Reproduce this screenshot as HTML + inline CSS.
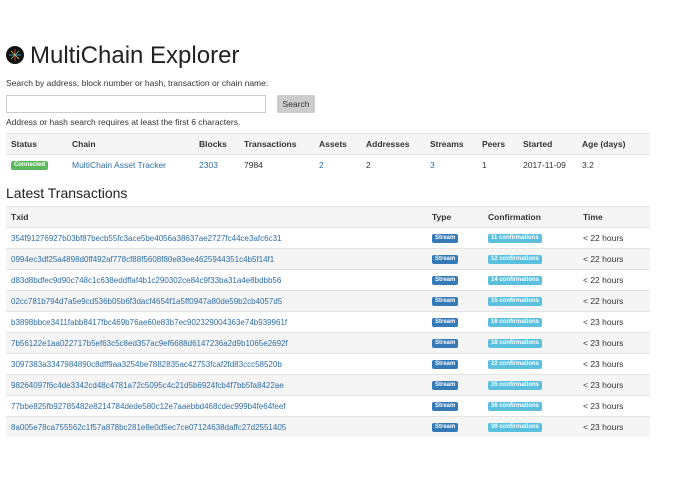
<!DOCTYPE html>
<html><head><meta charset="utf-8"><style>
body{margin:0;background:#fff;font-family:"Liberation Sans",sans-serif;color:#333;font-size:8.5px;}
.wrap{position:absolute;left:6px;top:0;width:644px;}
h1{position:absolute;left:0;top:41px;margin:0;font-size:24px;font-weight:normal;color:#222;line-height:30px;white-space:nowrap}
.logo{display:inline-block;width:18px;height:18px;border-radius:50%;background:#111;vertical-align:-1px;margin-right:6px;position:relative}
.p1{position:absolute;top:78px;left:0;white-space:nowrap}
input{position:absolute;top:95px;left:0;width:258px;height:16px;border:1px solid #ccc;padding:0;margin:0}
.btn{position:absolute;top:95px;left:271px;width:38px;height:18px;background:#ccc;border-radius:2px;text-align:center;line-height:18px;color:#333}
.p2{position:absolute;top:117px;left:0;white-space:nowrap}
table{position:absolute;left:0;width:644px;border-collapse:collapse}
td,th{text-align:left;padding:0 0 0 5px;height:20px;border-top:1px solid #e3e3e3;white-space:nowrap;vertical-align:middle}
th{font-weight:bold;color:#333}
tr.g{background:#f5f5f5}
a{color:#2e6da4;text-decoration:none}
.tx a{font-size:8px}
.lbl{display:inline-block;font-size:6px;color:#fff;font-weight:bold;padding:1px 3px;border-radius:2px;line-height:7px;vertical-align:middle}
h2{position:absolute;top:185px;left:0;margin:0;font-size:14px;font-weight:normal;color:#222}
</style></head><body><div class="wrap">
<h1><span class="logo"><svg width="18" height="18" viewBox="0 0 18 18" style="position:absolute;left:0;top:0"><g stroke-width="0.8"><line x1="9" y1="3" x2="9" y2="15" stroke="#e44"/><line x1="3" y1="9" x2="15" y2="9" stroke="#4ae"/><line x1="5" y1="5" x2="13" y2="13" stroke="#ec4"/><line x1="13" y1="5" x2="5" y2="13" stroke="#6c6"/></g></svg></span>MultiChain Explorer</h1>
<div class="p1">Search by address, block number or hash, transaction or chain name:</div>
<input type="text"><div class="btn">Search</div>
<div class="p2">Address or hash search requires at least the first 6 characters.</div>
<table style="top:133px">
<tr class="g"><th style="width:56px">Status</th><th style="width:122px">Chain</th><th style="width:40px">Blocks</th><th style="width:70px">Transactions</th><th style="width:42px">Assets</th><th style="width:59px">Addresses</th><th style="width:47px">Streams</th><th style="width:36px">Peers</th><th style="width:54px">Started</th><th>Age (days)</th></tr>
<tr><td><span class="lbl" style="background:#5cb85c">Connected</span></td><td><a>MultiChain Asset Tracker</a></td><td><a>2303</a></td><td>7984</td><td><a>2</a></td><td>2</td><td><a>3</a></td><td>1</td><td>2017-11-09</td><td>3.2</td></tr>
</table>
<h2>Latest Transactions</h2>
<table style="top:206px" class="tx">
<tr class="g"><th style="width:416px">Txid</th><th style="width:51px">Type</th><th style="width:90px">Confirmation</th><th>Time</th></tr>
<tr><td><a>354f91276927b03bf87becb55fc3ace5be4056a38637ae2727fc44ce3afc6c31</a></td><td><span class="lbl" style="background:#337ab7">Stream</span></td><td><span class="lbl" style="background:#5bc0de">11 confirmations</span></td><td>&lt; 22 hours</td></tr>
<tr class="g"><td><a>0994ec3df25a4898d0ff492af778cf88f5608f80e83ee4625944351c4b5f14f1</a></td><td><span class="lbl" style="background:#337ab7">Stream</span></td><td><span class="lbl" style="background:#5bc0de">12 confirmations</span></td><td>&lt; 22 hours</td></tr>
<tr><td><a>d83d8bdfec9d90c748c1c638eddffaf4b1c290302ce84c9f33ba31a4e8bdbb56</a></td><td><span class="lbl" style="background:#337ab7">Stream</span></td><td><span class="lbl" style="background:#5bc0de">14 confirmations</span></td><td>&lt; 22 hours</td></tr>
<tr class="g"><td><a>02cc781b794d7a5e9cd536b05b6f3dacf4654f1a5ff0947a80de59b2cb4057d5</a></td><td><span class="lbl" style="background:#337ab7">Stream</span></td><td><span class="lbl" style="background:#5bc0de">15 confirmations</span></td><td>&lt; 22 hours</td></tr>
<tr><td><a>b3898bbce3411fabb8417fbc469b76ae60e83b7ec902329004363e74b939961f</a></td><td><span class="lbl" style="background:#337ab7">Stream</span></td><td><span class="lbl" style="background:#5bc0de">16 confirmations</span></td><td>&lt; 23 hours</td></tr>
<tr class="g"><td><a>7b56122e1aa022717b5ef63c5c8ed357ac9ef6688d6147236a2d9b1065e2692f</a></td><td><span class="lbl" style="background:#337ab7">Stream</span></td><td><span class="lbl" style="background:#5bc0de">18 confirmations</span></td><td>&lt; 23 hours</td></tr>
<tr><td><a>3097383a3347984890c8dff9aa3254be7882835ac42753fcaf2fd83ccc58520b</a></td><td><span class="lbl" style="background:#337ab7">Stream</span></td><td><span class="lbl" style="background:#5bc0de">22 confirmations</span></td><td>&lt; 23 hours</td></tr>
<tr class="g"><td><a>98264097f6c4de3342cd48c4781a72c5095c4c21d5b6924fcb4f7bb5fa8422ae</a></td><td><span class="lbl" style="background:#337ab7">Stream</span></td><td><span class="lbl" style="background:#5bc0de">35 confirmations</span></td><td>&lt; 23 hours</td></tr>
<tr><td><a>77bbe825fb92785482e8214784dede580c12e7aaebbd468cdec999b4fe64feef</a></td><td><span class="lbl" style="background:#337ab7">Stream</span></td><td><span class="lbl" style="background:#5bc0de">36 confirmations</span></td><td>&lt; 23 hours</td></tr>
<tr class="g"><td><a>8a005e78ca755562c1f57a878bc281e8e0d5ec7ce07124638daffc27d2551405</a></td><td><span class="lbl" style="background:#337ab7">Stream</span></td><td><span class="lbl" style="background:#5bc0de">39 confirmations</span></td><td>&lt; 23 hours</td></tr>
</table>
</div></body></html>
